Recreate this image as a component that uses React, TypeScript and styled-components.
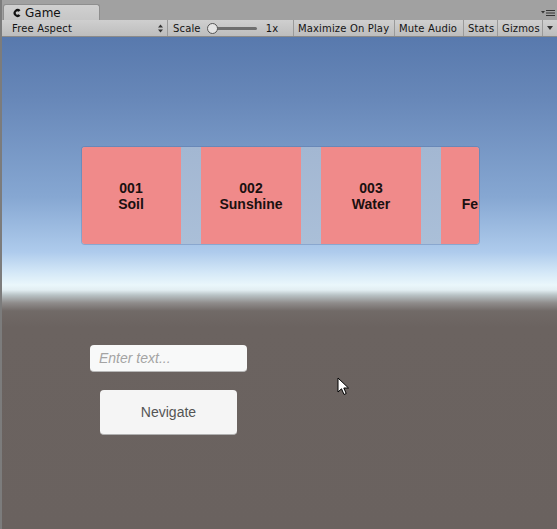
import React from 'react'
import styled, { createGlobalStyle } from 'styled-components'

const GlobalStyle = createGlobalStyle`
  html, body, #root {
    margin: 0;
    padding: 0;
    width: 557px;
    height: 529px;
    overflow: hidden;
  }
  body {
    font-family: "DejaVu Sans", "Liberation Sans", sans-serif;
  }
`

const Window = styled.div`
  width: 557px;
  height: 529px;
  display: flex;
  flex-direction: column;
  border-left: 2px solid #7c7c7c;
  box-sizing: border-box;
  background: #a2a2a2;
`

const TabBar = styled.div`
  height: 20px;
  display: flex;
  align-items: flex-end;
  padding-left: 1px;
  position: relative;
  background: #a1a1a1;
`

const Tab = styled.div`
  width: 97px;
  height: 16px;
  box-sizing: border-box;
  background: linear-gradient(#d0d0d0, #c6c6c6);
  border: 1px solid #8e8e8e;
  border-bottom: none;
  border-radius: 3px 3px 0 0;
  display: flex;
  align-items: center;
  gap: 3px;
  padding-left: 8px;
  font-size: 12px;
  color: #111;
`

const TabMenu = styled.svg`
  position: absolute;
  right: 2px;
  top: 9px;
`

const Toolbar = styled.div`
  height: 16px;
  display: flex;
  align-items: stretch;
  background: linear-gradient(#cfcfcf, #bdbdbd);
  border-bottom: 1px solid #8a8a8a;
  font-size: 10px;
  color: #141414;
  letter-spacing: 0.15px;
`

const ToolItem = styled.div<{ $w?: number; $last?: boolean }>`
  width: ${p => (p.$w ? `${p.$w}px` : 'auto')};
  flex: ${p => (p.$w ? 'none' : '1')};
  display: flex;
  align-items: center;
  justify-content: ${p => (p.$last ? 'center' : 'space-between')};
  padding: 0 4px;
  box-sizing: border-box;
  border-right: ${p => (p.$last ? 'none' : '1px solid #9a9a9a')};
  white-space: nowrap;
`

const ScaleItem = styled(ToolItem)`
  justify-content: flex-start;
  padding-left: 5px;
`

const Spacer = styled.div`
  width: 6px;
`

const Slider = styled.div`
  width: 46px;
  height: 3px;
  margin: 0 9px 0 10px;
  background: #6e6e6e;
  border-radius: 2px;
  position: relative;
`

const Thumb = styled.div`
  position: absolute;
  left: -4px;
  top: -4px;
  width: 11px;
  height: 11px;
  border-radius: 50%;
  background: #e4e4e4;
  border: 1px solid #555;
  box-sizing: border-box;
`

const Game = styled.div`
  flex: 1;
  position: relative;
  display: flex;
  flex-direction: column;
  align-items: flex-start;
  padding-top: 110px;
  background: linear-gradient(
    #5879ad 0px,
    #6787b8 60px,
    #86a7d2 160px,
    #aecbec 215px,
    #d3e7f7 235px,
    #eaf7fb 248px,
    #e2eef2 253px,
    #b9c3c6 258px,
    #8f8c8b 266px,
    #716a67 274px,
    #6b6360 290px,
    #6a625f 100%
  );
`

const ScrollPanel = styled.div`
  margin-left: 80px;
  width: 397px;
  height: 97px;
  display: flex;
  gap: 20px;
  overflow: hidden;
  border-radius: 3px;
  background: linear-gradient(#a3b7d2, #aabfd8);
  box-shadow: 0 0 0 1px rgba(80, 110, 160, 0.35);
`

const Card = styled.div`
  flex: none;
  width: 100px;
  height: 100%;
  background: #f08a8a;
  display: flex;
  flex-direction: column;
  align-items: center;
  justify-content: center;
  font-family: "Liberation Sans", Arial, sans-serif;
  font-weight: bold;
  font-size: 14px;
  line-height: 16px;
  color: #1a1010;
  white-space: nowrap;
  &:first-child {
    margin-left: -1px;
  }
`

const TextField = styled.div`
  margin: 101px 0 0 88px;
  width: 157px;
  height: 27px;
  box-sizing: border-box;
  background: #f8f9f9;
  border-radius: 4px;
  border-bottom: 1px solid #b8b8b8;
  display: flex;
  align-items: center;
  padding-left: 9px;
  font-family: "Liberation Sans", Arial, sans-serif;
  font-style: italic;
  font-size: 14px;
  color: #a4a4a4;
`

const Button = styled.div`
  margin: 18px 0 0 98px;
  width: 137px;
  height: 45px;
  box-sizing: border-box;
  background: #f5f5f5;
  border-radius: 4px;
  border-bottom: 1px solid #b0b0b0;
  display: flex;
  align-items: center;
  justify-content: center;
  font-family: "Liberation Sans", Arial, sans-serif;
  font-size: 14px;
  color: #545454;
`

const Cursor = styled.svg`
  position: absolute;
  left: 335px;
  top: 340px;
`

const items = [
  { id: '001', name: 'Soil' },
  { id: '002', name: 'Sunshine' },
  { id: '003', name: 'Water' },
  { id: '004', name: 'Fertilizer' },
]

const App: React.FC = () => {
  return (
    <>
      <GlobalStyle />
      <Window>
        <TabBar>
          <Tab>
            <svg width="10" height="10" viewBox="0 0 10 10">
              <path d="M8.5 2.2 A4 4 0 1 0 8.5 7.8 L6.6 6.3 A1.7 1.7 0 1 1 6.6 3.7 Z" fill="#111" />
            </svg>
            Game
          </Tab>
          <TabMenu width="14" height="8" viewBox="0 0 14 8">
            <path d="M0 2h4L2 4.5Z" fill="#333" />
            <path d="M5 1.5h9M5 4h9M5 6.5h9" stroke="#333" strokeWidth="1" />
          </TabMenu>
        </TabBar>
        <Toolbar>
          <Spacer />
          <ToolItem $w={160}>
            Free Aspect
            <svg width="5" height="9" viewBox="0 0 5 9">
              <path d="M0 3.5L2.5 0.5L5 3.5ZM0 5.5L2.5 8.5L5 5.5Z" fill="#333" />
            </svg>
          </ToolItem>
          <ScaleItem $w={126}>
            Scale
            <Slider>
              <Thumb />
            </Slider>
            1x
          </ScaleItem>
          <ToolItem $w={101}>Maximize On Play</ToolItem>
          <ToolItem $w={69}>Mute Audio</ToolItem>
          <ToolItem $w={34}>Stats</ToolItem>
          <ToolItem $w={45}>Gizmos</ToolItem>
          <ToolItem $last>
            <svg width="6" height="4" viewBox="0 0 6 4">
              <path d="M0 0h6L3 4Z" fill="#333" />
            </svg>
          </ToolItem>
        </Toolbar>
        <Game>
          <ScrollPanel>
            {items.map(it => (
              <Card key={it.id}>
                <span>{it.id}</span>
                <span>{it.name}</span>
              </Card>
            ))}
          </ScrollPanel>
          <TextField>Enter text...</TextField>
          <Button>Nevigate</Button>
          <Cursor width="13" height="20" viewBox="0 0 13 20">
            <path
              d="M1 1 L1 15 L4.5 11.8 L7 17.5 L9.2 16.5 L6.8 11 L11.5 11 Z"
              fill="#fff"
              stroke="#000"
              strokeWidth="1"
              strokeLinejoin="miter"
            />
          </Cursor>
        </Game>
      </Window>
    </>
  )
}

export default App
